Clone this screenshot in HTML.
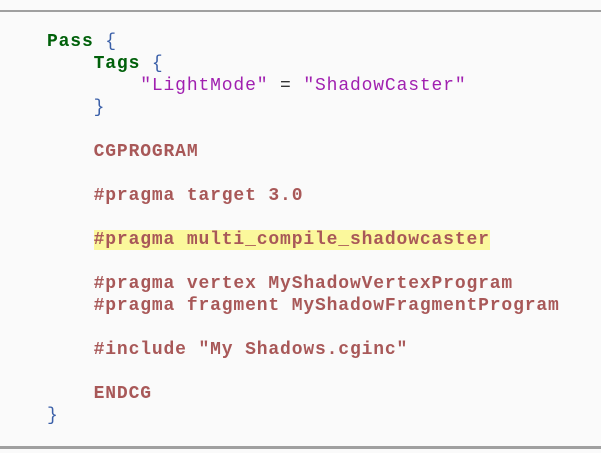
<!DOCTYPE html>
<html><head><style>
html,body{margin:0;padding:0;background:#fafafa;width:601px;height:453px;overflow:hidden}
.top{position:absolute;left:0;top:10px;width:601px;height:2px;background:#a0a0a0}
.bot{position:absolute;left:0;top:446px;width:601px;height:3px;background:#a0a0a0}
pre{position:absolute;left:47px;top:31px;margin:0;font-family:"Liberation Mono","Courier New",monospace;font-size:18px;letter-spacing:0.85px;line-height:22px;color:#333}
.k{color:#00600a;font-weight:bold}
.b{color:#3a5fa8}
.s{color:#a020b0}
.d{color:#a85858;font-weight:bold}
.hl{background:#fbf89c}
</style></head><body>
<div class="top"></div>
<pre><span class="k">Pass</span> <span class="b">{</span>
    <span class="k">Tags</span> <span class="b">{</span>
        <span class="s">"LightMode"</span> = <span class="s">"ShadowCaster"</span>
    <span class="b">}</span>

    <span class="d">CGPROGRAM</span>

    <span class="d">#pragma target 3.0</span>

    <span class="d hl">#pragma multi_compile_shadowcaster</span>

    <span class="d">#pragma vertex MyShadowVertexProgram</span>
    <span class="d">#pragma fragment MyShadowFragmentProgram</span>

    <span class="d">#include "My Shadows.cginc"</span>

    <span class="d">ENDCG</span>
<span class="b">}</span></pre>
<div class="bot"></div>
</body></html>
